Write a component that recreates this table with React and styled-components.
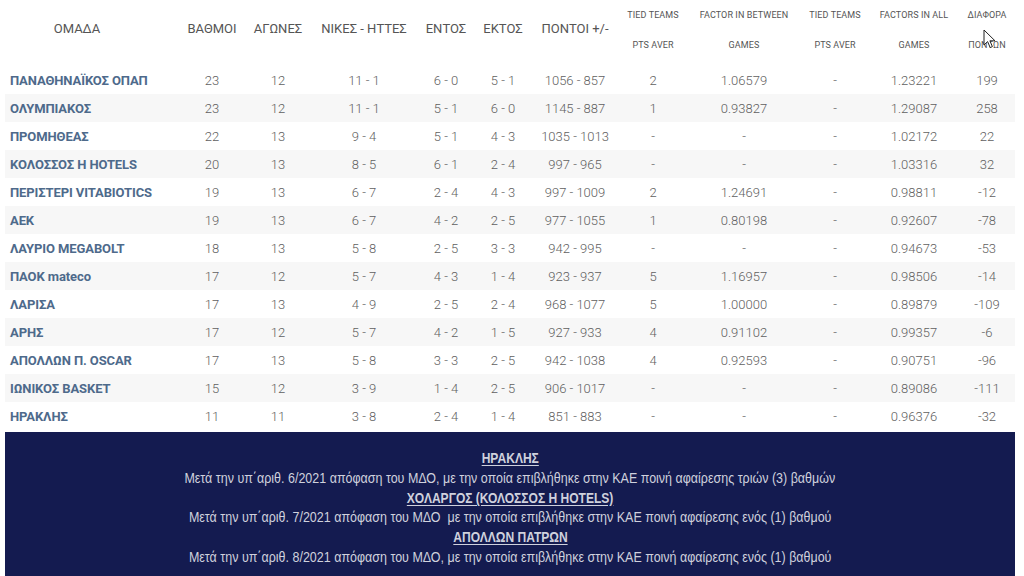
import React from 'react';
import styled, { createGlobalStyle } from 'styled-components';

const GlobalStyle = createGlobalStyle`
  html, body {
    margin: 0;
    padding: 0;
    background: #ffffff;
  }
  body {
    font-family: Roboto, 'Noto Sans', sans-serif;
    overflow: hidden;
  }
`;

const columns = [
  { key: 'team', width: 174, title: 'ΟΜΑΔΑ' },
  { key: 'pts', width: 66, title: 'ΒΑΘΜΟΙ' },
  { key: 'games', width: 66, title: 'ΑΓΩΝΕΣ' },
  { key: 'wl', width: 106, title: 'ΝΙΚΕΣ - ΗΤΤΕΣ' },
  { key: 'home', width: 58, title: 'ΕΝΤΟΣ' },
  { key: 'away', width: 56, title: 'ΕΚΤΟΣ' },
  { key: 'score', width: 88, title: 'ΠΟΝΤΟΙ +/-' },
  { key: 'tied1', width: 68, lines: ['TIED TEAMS', 'PTS AVER'] },
  { key: 'between', width: 114, lines: ['FACTOR IN BETWEEN', 'GAMES'] },
  { key: 'tied2', width: 68, lines: ['TIED TEAMS', 'PTS AVER'] },
  { key: 'all', width: 90, lines: ['FACTORS IN ALL', 'GAMES'] },
  { key: 'diff', width: 56, lines: ['ΔΙΑΦΟΡΑ', 'ΠΟΝΤΩΝ'] },
];

const teams = [
  ['ΠΑΝΑΘΗΝΑΪΚΟΣ ΟΠΑΠ', 23, 12, '11 - 1', '6 - 0', '5 - 1', '1056 - 857', '2', '1.06579', '-', '1.23221', '199'],
  ['ΟΛΥΜΠΙΑΚΟΣ', 23, 12, '11 - 1', '5 - 1', '6 - 0', '1145 - 887', '1', '0.93827', '-', '1.29087', '258'],
  ['ΠΡΟΜΗΘΕΑΣ', 22, 13, '9 - 4', '5 - 1', '4 - 3', '1035 - 1013', '-', '-', '-', '1.02172', '22'],
  ['ΚΟΛΟΣΣΟΣ H HOTELS', 20, 13, '8 - 5', '6 - 1', '2 - 4', '997 - 965', '-', '-', '-', '1.03316', '32'],
  ['ΠΕΡΙΣΤΕΡΙ VITABIOTICS', 19, 13, '6 - 7', '2 - 4', '4 - 3', '997 - 1009', '2', '1.24691', '-', '0.98811', '-12'],
  ['ΑΕΚ', 19, 13, '6 - 7', '4 - 2', '2 - 5', '977 - 1055', '1', '0.80198', '-', '0.92607', '-78'],
  ['ΛΑΥΡΙΟ MEGABOLT', 18, 13, '5 - 8', '2 - 5', '3 - 3', '942 - 995', '-', '-', '-', '0.94673', '-53'],
  ['ΠΑΟΚ mateco', 17, 12, '5 - 7', '4 - 3', '1 - 4', '923 - 937', '5', '1.16957', '-', '0.98506', '-14'],
  ['ΛΑΡΙΣΑ', 17, 13, '4 - 9', '2 - 5', '2 - 4', '968 - 1077', '5', '1.00000', '-', '0.89879', '-109'],
  ['ΑΡΗΣ', 17, 12, '5 - 7', '4 - 2', '1 - 5', '927 - 933', '4', '0.91102', '-', '0.99357', '-6'],
  ['ΑΠΟΛΛΩΝ Π. OSCAR', 17, 13, '5 - 8', '3 - 3', '2 - 5', '942 - 1038', '4', '0.92593', '-', '0.90751', '-96'],
  ['ΙΩΝΙΚΟΣ BASKET', 15, 12, '3 - 9', '1 - 4', '2 - 5', '906 - 1017', '-', '-', '-', '0.89086', '-111'],
  ['ΗΡΑΚΛΗΣ', 11, 11, '3 - 8', '2 - 4', '1 - 4', '851 - 883', '-', '-', '-', '0.96376', '-32'],
];

const notes = [
  {
    team: 'ΗΡΑΚΛΗΣ',
    text: 'Μετά την υπ΄αριθ. 6/2021 απόφαση του ΜΔΟ, με την οποία επιβλήθηκε στην ΚΑΕ ποινή αφαίρεσης τριών (3) βαθμών',
  },
  {
    team: 'ΧΟΛΑΡΓΟΣ (ΚΟΛΟΣΣΟΣ H HOTELS)',
    text: 'Μετά την υπ΄αριθ. 7/2021 απόφαση του ΜΔΟ  με την οποία επιβλήθηκε στην ΚΑΕ ποινή αφαίρεσης ενός (1) βαθμού',
  },
  {
    team: 'ΑΠΟΛΛΩΝ ΠΑΤΡΩΝ',
    text: 'Μετά την υπ΄αριθ. 8/2021 απόφαση του ΜΔΟ, με την οποία επιβλήθηκε στην ΚΑΕ ποινή αφαίρεσης ενός (1) βαθμού',
  },
];

const Page = styled.div`
  position: relative;
  width: 1024px;
  height: 576px;
  padding: 0 9px 0 5px;
  box-sizing: border-box;
`;

const StandingsTable = styled.table`
  width: 1010px;
  border-collapse: collapse;
  table-layout: fixed;
`;

const HeadCell = styled.th`
  height: 66px;
  padding: ${({ $small }) => ($small ? '0' : '21px')} ${({ $team }) => ($team ? '30px' : '0')} 0 0;
  box-sizing: border-box;
  text-align: center;
  vertical-align: top;
  font-weight: 400;
  font-size: 13px;
  line-height: 16px;
  color: #555;
  white-space: nowrap;
`;

const SmallHead = styled.div`
  font-size: 9px;
  line-height: 30px;
  color: #555;
  letter-spacing: 0.1px;
`;

const Row = styled.tr`
  height: 28px;
  background: ${({ $striped }) => ($striped ? '#f7f7f7' : '#ffffff')};
`;

const TeamCell = styled.td`
  padding: 0 0 0 5px;
  font-weight: 700;
  font-size: 13px;
  color: #4e6a8b;
  white-space: nowrap;
  letter-spacing: -0.1px;
`;

const ValueCell = styled.td`
  padding: 0;
  text-align: center;
  font-weight: 300;
  font-size: 13px;
  color: #5f5f5f;
  white-space: nowrap;
`;

const Banner = styled.section`
  margin-top: 2px;
  width: 1010px;
  height: 150px;
  background: #141b50;
  padding-top: 17px;
  box-sizing: border-box;
  display: flex;
  flex-direction: column;
  align-items: center;
  font-family: 'Liberation Sans', Arial, sans-serif;
  font-size: 14px;
  line-height: 19.8px;
  color: #cfd1dd;
`;

const NoteTitle = styled.div`
  font-weight: 700;
  text-decoration: underline;
  text-underline-offset: 2px;
  transform: scaleX(0.86);
`;

const NoteText = styled.div`
  white-space: pre;
  transform: scaleX(0.892);
`;

const Cursor = styled.svg`
  position: absolute;
  left: 983px;
  top: 29px;
`;

const App = () => (
  <Page>
    <GlobalStyle />
    <StandingsTable>
      <colgroup>
        {columns.map(({ key, width }) => (
          <col key={key} style={{ width }} />
        ))}
      </colgroup>
      <thead>
        <tr>
          {columns.map(({ key, title, lines }) => (
            <HeadCell key={key} $team={key === 'team'} $small={!!lines}>
              {title}
              {lines && lines.map((line) => <SmallHead key={line}>{line}</SmallHead>)}
            </HeadCell>
          ))}
        </tr>
      </thead>
      <tbody>
        {teams.map(([name, ...values], i) => (
          <Row key={name} $striped={i % 2 === 1}>
            <TeamCell>{name}</TeamCell>
            {values.map((value, j) => (
              <ValueCell key={j}>{value}</ValueCell>
            ))}
          </Row>
        ))}
      </tbody>
    </StandingsTable>
    <Banner>
      {notes.map(({ team, text }) => (
        <React.Fragment key={team}>
          <NoteTitle>{team}</NoteTitle>
          <NoteText>{text}</NoteText>
        </React.Fragment>
      ))}
    </Banner>
    <Cursor width="14" height="20" viewBox="0 0 14 20">
      <path
        d="M1 1 L1 16 L4.6 12.6 L7.2 18.6 L9.4 17.6 L6.9 11.8 L12 11.8 Z"
        fill="#ffffff"
        stroke="#222"
        strokeWidth="1"
        strokeLinejoin="round"
      />
    </Cursor>
  </Page>
);

export default App;
